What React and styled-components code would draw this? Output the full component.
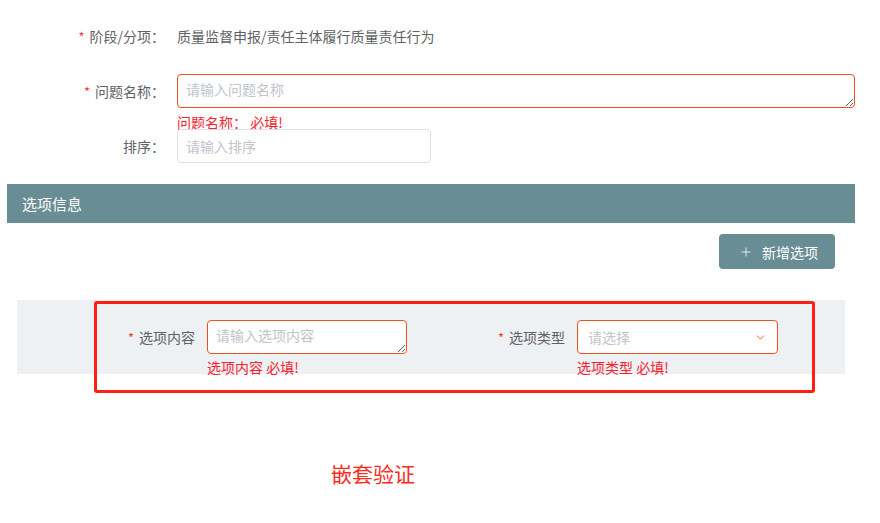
import React from 'react'
import styled, { createGlobalStyle } from 'styled-components'
import { Plus, ChevronDown } from 'lucide-react'

const GlobalStyle = createGlobalStyle`
  body {
    margin: 0;
    background: #fff;
    font-family: "Noto Sans CJK SC", "Noto Sans", sans-serif;
    color: #606266;
  }
  * { box-sizing: border-box; }
`

const Page = styled.div`
  position: relative;
  width: 880px;
  min-height: 523px;
  padding-top: 19px;
`

const FormRow = styled.div`
  display: flex;
  align-items: flex-start;
  margin-bottom: ${p => p.gap || 0}px;
`

const Label = styled.div`
  width: ${p => p.width || 177}px;
  height: 34px;
  padding-right: 12px;
  text-align: right;
  line-height: 34px;
  font-size: 14px;
  color: #606266;
  flex-shrink: 0;
`

const Star = styled.span`
  color: #f04134;
  font-size: 13px;
  line-height: 1;
  margin-right: 5px;
`

const Value = styled.div`
  height: 34px;
  line-height: 34px;
  font-size: 14px;
  color: #606266;
`

const Field = styled.div`
  display: flex;
  flex-direction: column;
`

const TextArea = styled.textarea`
  display: block;
  width: ${p => p.width}px;
  height: 34px;
  padding: 4px 8px;
  border: 1px solid ${p => (p.invalid ? '#f0501e' : '#dcdfe6')};
  border-radius: 4px;
  font-family: inherit;
  font-size: 14px;
  line-height: 20px;
  color: #606266;
  background: #fff;
  resize: vertical;
  outline: none;

  &::placeholder {
    color: #c0c4cc;
  }
`

const Input = styled.input`
  display: block;
  width: ${p => p.width}px;
  height: 34px;
  padding: 0 8px;
  border: 1px solid #dcdfe6;
  border-radius: 4px;
  font-family: inherit;
  font-size: 14px;
  color: #606266;
  outline: none;

  &::placeholder {
    color: #c0c4cc;
  }
`

const Error = styled.div`
  margin-top: ${p => p.top || 7}px;
  line-height: 14px;
  font-size: 14px;
  color: #f5222d;
  height: 14px;
`

const SectionHeader = styled.div`
  margin: 21px 0 0 7px;
  width: 848px;
  height: 39px;
  padding-left: 15px;
  display: flex;
  align-items: center;
  background: #688d95;
  color: #fff;
  font-size: 15px;
`

const Toolbar = styled.div`
  margin: 11px 0 0 7px;
  width: 848px;
  padding-right: 20px;
  display: flex;
  justify-content: flex-end;
`

const AddButton = styled.button`
  width: 116px;
  height: 35px;
  display: flex;
  align-items: center;
  justify-content: center;
  gap: 9px;
  padding: 0 0 0 3px;
  border: none;
  border-radius: 4px;
  background: #688d95;
  color: #fff;
  font-family: inherit;
  font-size: 14px;
  cursor: pointer;
`

const Panel = styled.div`
  margin: 31px 0 0 17px;
  width: 828px;
  height: 74px;
  padding: 20px 0 0 98px;
  display: flex;
  gap: 78px;
  background: #edf1f4;
`

const Item = styled.div`
  display: flex;
  align-items: flex-start;
`

const Select = styled.div`
  width: ${p => p.width}px;
  height: 34px;
  padding: 0 10px;
  display: flex;
  align-items: center;
  justify-content: space-between;
  border: 1px solid ${p => (p.invalid ? '#f0501e' : '#dcdfe6')};
  border-radius: 4px;
  background: #fff;
  font-size: 14px;
  color: #c0c4cc;
`

const Annotation = styled.div`
  position: absolute;
  left: 94px;
  top: 301px;
  width: 721px;
  height: 92px;
  border: 3px solid #ff1e14;
  border-radius: 3px;
  pointer-events: none;
`

const Caption = styled.div`
  margin-top: 86px;
  padding-left: 331px;
  font-size: 21px;
  line-height: 26px;
  color: #ff2a1e;
`

export default function App() {
  return (
    <Page>
      <GlobalStyle />
      <FormRow gap={21}>
        <Label><Star>*</Star>阶段/分项：</Label>
        <Value>质量监督申报/责任主体履行质量责任行为</Value>
      </FormRow>

      <FormRow>
        <Label><Star>*</Star>问题名称：</Label>
        <Field>
          <TextArea width={678} invalid placeholder="请输入问题名称" />
          <Error>问题名称： 必填!</Error>
        </Field>
      </FormRow>

      <FormRow>
        <Label>排序：</Label>
        <Input width={254} placeholder="请输入排序" />
      </FormRow>

      <SectionHeader>选项信息</SectionHeader>

      <Toolbar>
        <AddButton>
          <Plus size={14} strokeWidth={1.4} />
          新增选项
        </AddButton>
      </Toolbar>

      <Panel>
        <Item>
          <Label width={92}><Star>*</Star>选项内容</Label>
          <Field>
            <TextArea width={200} invalid placeholder="请输入选项内容" />
            <Error top={6}>选项内容 必填!</Error>
          </Field>
        </Item>
        <Item>
          <Label width={92}><Star>*</Star>选项类型</Label>
          <Field>
            <Select width={201} invalid>
              请选择
              <ChevronDown size={13} strokeWidth={1.6} color="#f0501e" />
            </Select>
            <Error top={6}>选项类型 必填!</Error>
          </Field>
        </Item>
      </Panel>

      <Annotation />

      <Caption>嵌套验证</Caption>
    </Page>
  )
}
